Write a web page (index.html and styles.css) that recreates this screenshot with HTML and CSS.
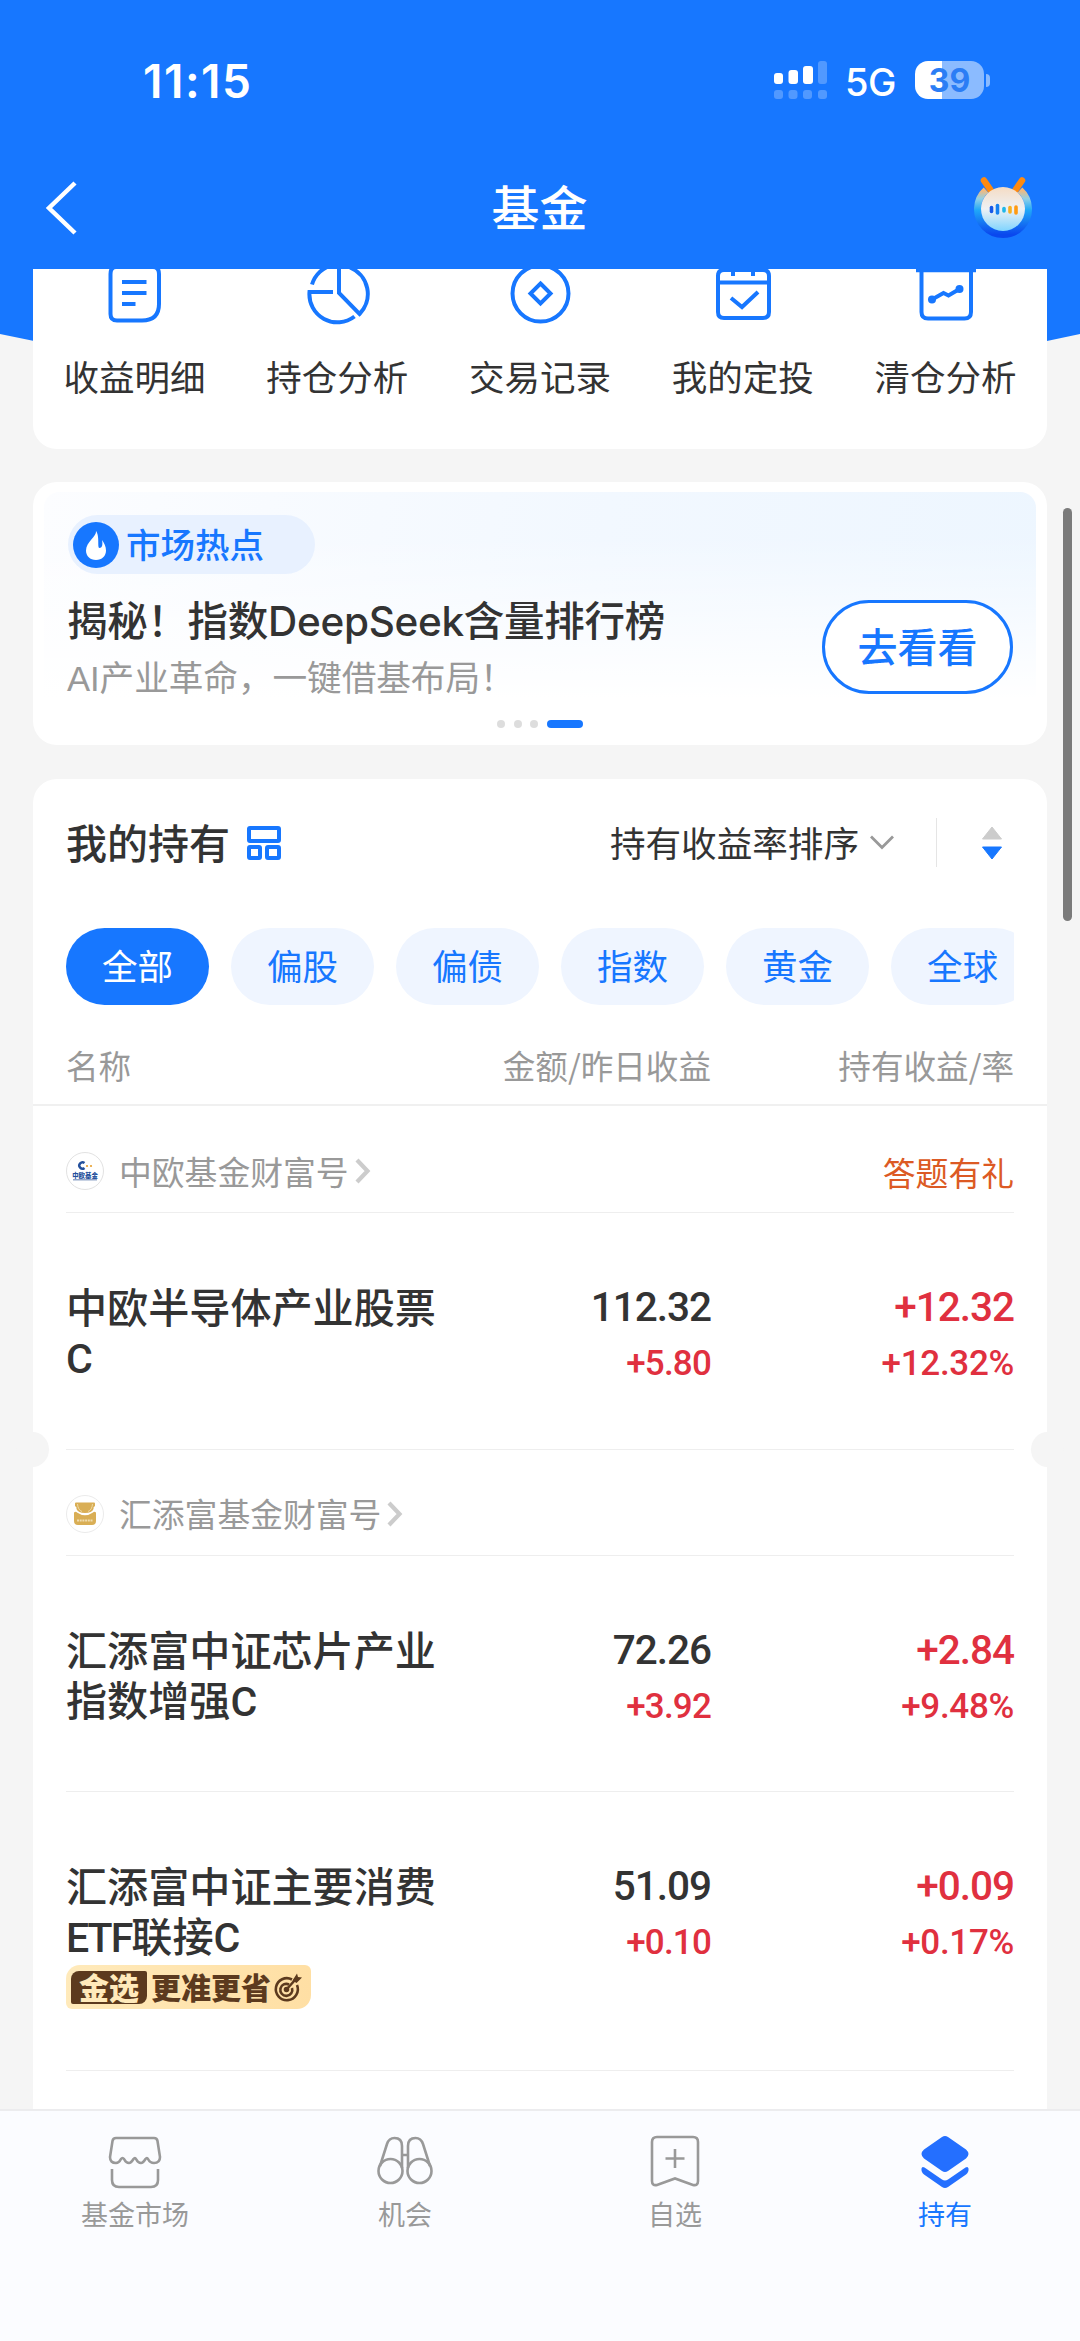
FILE: index.html
```
<!DOCTYPE html>
<html lang="zh-CN">
<head>
<meta charset="utf-8">
<title>基金</title>
<link rel="stylesheet" href="styles.css">
</head>
<body>
<div class="screen">
  <header class="header">
    <div class="status">
      <span class="time">11:15</span>
      <div class="status-right">
        <svg class="signal" width="54" height="38" viewBox="0 0 54 38" fill="#fff">
          <rect x="0" y="12" width="9" height="11" rx="3"/><rect x="14.5" y="9" width="9.500" height="14" rx="3"/><rect x="29" y="5" width="10" height="18" rx="3"/>
          <g opacity=".25"><rect x="44" y="0" width="9" height="23" rx="3"/><rect x="0" y="29" width="9" height="9" rx="3"/><rect x="14.5" y="29" width="9" height="9" rx="3"/><rect x="29" y="29" width="9" height="9" rx="3"/><rect x="44" y="29" width="9" height="9" rx="3"/></g>
        </svg>
        <span class="net">5G</span>
        <div class="battery"><span>39</span></div>
        <i class="battery-cap"></i>
      </div>
    </div>
    <div class="nav">
      <svg width="34" height="56" viewBox="0 0 34 56" fill="none" stroke="#fff" stroke-width="4.500"><path d="M31 2 5 27 31 52"/></svg>
      <h1>基金</h1>
      <svg width="62" height="64" viewBox="0 0 62 64">
        <defs>
          <linearGradient id="ring" x1="0" y1="0" x2="0" y2="1"><stop offset="0" stop-color="#f8b878"/><stop offset=".2" stop-color="#8fd0e8"/><stop offset=".45" stop-color="#20a8f8"/><stop offset="1" stop-color="#0a48ee"/></linearGradient>
          <linearGradient id="face" x1="0" y1="0" x2="0" y2="1"><stop offset="0" stop-color="#f5dcc4"/><stop offset=".5" stop-color="#eef1f4"/><stop offset="1" stop-color="#7fd4ff"/></linearGradient>
        </defs>
        <path d="M13 13A25.500 25.500 0 1 0 47 13" fill="none" stroke="url(#ring)" stroke-width="7"/>
        <path d="M11 3.500 17.500 13M49 3.500 42.500 13" stroke="#ff8a10" stroke-width="6.500" stroke-linecap="round"/>
        <circle cx="30" cy="32" r="22" fill="url(#face)"/>
        <g stroke-width="3.600" stroke-linecap="round"><path d="M18.500 30.500v4" stroke="#1558e8"/><path d="M24.500 28.500v7.500" stroke="#1480f0"/><path d="M31 31.500v2.500" stroke="#20b8e8"/><path d="M37 30.500v4.500" stroke="#f8b020"/><path d="M43 30v6" stroke="#ff9a10"/></g>
      </svg>
    </div>
  </header>

  <main class="content">
    <svg class="arc" width="1080" height="90" viewBox="0 0 1080 90"><path d="M0 0H1080V65Q810 124 540 124T0 65Z" fill="#1777ff"/></svg>
    <section class="card shortcuts">
      <div class="shortcut"><svg viewBox="0 0 64 64"><path d="M14 -2Q8.500 -2 8.500 5V45Q8.500 51.500 15 51.500H40Q57 51.500 57 35V5Q57 -2 51 -2"/><path d="M20 13H44.500M20 24H44.500M20 35H33.500"/></svg><span>收益明细</span></div>
      <div class="shortcut"><svg viewBox="0 0 64 64"><path d="M34 -4V24L54.500 45A28.500 28.500 0 0 0 45 -1.500"/><path d="M28 -4A28 28 0 0 0 7 15.500M28 23H4.500A28 28 0 0 0 49.500 47.500"/></svg><span>持仓分析</span></div>
      <div class="shortcut"><svg viewBox="0 0 64 64"><circle cx="32.500" cy="24.500" r="28"/><path d="M32.500 14.500 42.500 24.500 32.500 34.500 22.500 24.500Z"/></svg><span>交易记录</span></div>
      <div class="shortcut"><svg viewBox="0 0 64 64"><path d="M13 1H52Q58 1 58 7V43Q58 49 52 49H13Q7 49 7 43V7Q7 1 13 1ZM7 13.500H58M22 0V7M42 0V7M20 29 31 38 47 23"/></svg><span>我的定投</span></div>
      <div class="shortcut"><svg viewBox="0 0 64 64"><path d="M2 1.200H62M7.500 1V43Q7.500 49.500 14 49.500H50.500Q57 49.500 57 43V1"/><path d="M18 30.500 29.500 24 34.500 26.500 45.500 20"/><g fill="#1777ff" stroke="none"><circle cx="18" cy="30.500" r="4"/><circle cx="45.500" cy="20" r="4"/></g></svg><span>清仓分析</span></div>
    </section>

    <section class="card banner">
      <div class="banner-bg">
        <div class="banner-text">
          <div class="tag"><svg width="46" height="46" viewBox="0 0 46 46"><circle cx="23" cy="23" r="23" fill="#1777ff"/><path d="M23 9C24 14 13 20 13 28.500C13 34 17 38 23 38C29 38 33 34 33 28.500C33 24 31 21 29 18C30 23 29 26 26.500 26C24 26 27 14 23 9Z" fill="#fff"/></svg><span>市场热点</span></div>
          <h2>揭秘！指数DeepSeek含量排行榜</h2>
          <p>AI产业革命，一键借基布局！</p>
        </div>
        <div class="go">去看看</div>
      </div>
      <div class="dots"><i></i><i></i><i></i><i class="on"></i></div>
    </section>

    <section class="card holdings">
      <div class="hold-head">
        <h2>我的持有</h2>
        <svg width="34" height="34" viewBox="0 0 34 34" fill="none" stroke="#1777ff" stroke-width="4"><rect x="2" y="2" width="30" height="13" rx="1"/><rect x="2" y="21" width="11" height="11" rx="1"/><rect x="20" y="21" width="12" height="11" rx="1"/></svg>
        <span class="sort">持有收益率排序</span>
        <svg width="24" height="16" viewBox="0 0 24 16" fill="none" stroke="#999" stroke-width="2.800"><path d="M1 1.500 12 12.500 23 1.500"/></svg>
        <i class="vline"></i>
        <svg width="20" height="34" viewBox="0 0 20 34" stroke-width="1" stroke-linejoin="round"><path d="M10 1 19.500 13H.5Z" fill="#ccc" stroke="#ccc"/><path d="M.5 21H19.500L10 33Z" fill="#1777ff" stroke="#1777ff"/></svg>
      </div>
      <div class="chips"><span class="chip on">全部</span><span class="chip">偏股</span><span class="chip">偏债</span><span class="chip">指数</span><span class="chip">黄金</span><span class="chip">全球</span></div>
      <div class="cols"><span>名称</span><span>金额/昨日收益</span><span>持有收益/率</span></div>

      <div class="group">
        <svg width="38" height="38" viewBox="0 0 38 38"><circle cx="19" cy="19" r="18.500" fill="#fff" stroke="#e2e2e2"/><path d="M18.500 11A3.200 3.200 0 1 0 18.500 16" fill="none" stroke="#24509c" stroke-width="2.400"/><circle cx="21" cy="14" r="1.100" fill="#e8a030"/><circle cx="25" cy="14" r="1.100" fill="#e8a030"/><text x="19" y="25.500" font-size="6.400" font-weight="900" text-anchor="middle" fill="#24509c">中欧基金</text><path d="M7 27.800H31" stroke="#7890bc" stroke-width="1.200"/></svg>
        <span>中欧基金财富号</span>
        <svg class="chev" width="15" height="26" viewBox="0 0 15 26"><path d="M2 2 12.500 13 2 24"/></svg>
        <em>答题有礼</em>
      </div>
      <div class="row">
        <div class="name">中欧半导体产业股票C</div>
        <div class="num"><b>112.32</b><span>+5.80</span></div>
        <div class="num up"><b>+12.32</b><span>+12.32%</span></div>
      </div>
      <div class="group notch">
        <svg width="38" height="38" viewBox="0 0 38 38"><circle cx="19" cy="19" r="18.500" fill="#fff" stroke="#ebebeb"/><path d="M9 8.500Q9 7.500 10 7.500H28Q29 7.500 29 8.500V11Q27 12 27.500 14Q26 18 19 18T10.500 14Q11 12 9 11Z" fill="#d9ae55"/><path d="M8 17.500Q10 16 11 17.500Q19 23 27 17.500Q28 16 30 17.500V26Q30 30 26 30H12Q8 30 8 26Z" fill="#d9ae55"/><path d="M11.500 9Q12 15 16 16.500M26.500 9Q26 15 22 16.500" fill="none" stroke="#eed9a4" stroke-width="1"/><path d="M11 25.500H27" stroke="#f0dcae" stroke-width="2" stroke-dasharray="2 .7"/></svg>
        <span>汇添富基金财富号</span>
        <svg class="chev" width="15" height="26" viewBox="0 0 15 26"><path d="M2 2 12.500 13 2 24"/></svg>
      </div>
      <div class="row">
        <div class="name">汇添富中证芯片产业指数增强C</div>
        <div class="num"><b>72.26</b><span>+3.92</span></div>
        <div class="num up"><b>+2.84</b><span>+9.48%</span></div>
      </div>
      <div class="row tall">
        <div class="name">汇添富中证主要消费<span class="latin">ETF</span>联接C
          <div class="badge"><strong>金选</strong><span>更准更省</span><svg width="28" height="30" viewBox="0 0 28 30" fill="none" stroke="#5c3a1e" stroke-width="2.600"><path d="M18 7.500A11 11 0 1 0 23 13"/><path d="M15 12.500A6 6 0 1 0 18 16"/><circle cx="12.500" cy="17.500" r="1.500" fill="#5c3a1e"/><path d="M12 18 21 8"/><path d="M18.500 8.500 23 1.500 24 5 28 5.500 22.500 11Z" fill="#5c3a1e" stroke="none"/></svg></div>
        </div>
        <div class="num"><b>51.09</b><span>+0.10</span></div>
        <div class="num up"><b>+0.09</b><span>+0.17%</span></div>
      </div>
    </section>
  </main>

  <nav class="tabs">
    <div class="tab"><svg viewBox="0 0 56 56"><path d="M9 3H47Q50 3 50.500 6L53 22Q53 28 47 28Q43 28 41 24Q40 22 38.500 24Q36 28 34 28Q31 28 29 24Q28 22 26.500 24Q24 28 22 28Q19 28 17 24Q15.500 22 14 24Q12 28 9 28Q3 28 3 22L5.500 6Q6 3 9 3ZM5 34V45Q5 52 12 52H44Q51 52 51 45V34"/></svg><span>基金市场</span></div>
    <div class="tab"><svg viewBox="0 0 56 56"><circle cx="13.500" cy="36" r="12"/><circle cx="42.500" cy="36" r="12"/><path d="M3 31 10 9Q12 3 17.500 3 25 3 25 11V33M31 33V11Q31 3 38.500 3 44 3 46 9L53 31M25 20H31"/></svg><span>机会</span></div>
    <div class="tab"><svg viewBox="0 0 56 56"><path d="M10 2H46Q51 2 51 7V46Q51 51 46 50L28 43.500 10 50Q5 51 5 46V7Q5 2 10 2ZM28 14V33M18.500 23.500H37.500"/></svg><span>自选</span></div>
    <div class="tab on"><svg viewBox="0 0 56 56"><path d="M25 2Q28 0 31 2L49 14.500Q54 19 49 23.500L31 36Q28 38 25 36L7 23.500Q2 19 7 14.500ZM4.500 33.500Q5 31 7.500 32.500L25 44.500Q28 46.500 31 44.500L48.500 32.500Q51 31 51.500 33.500 52 37 49 39.500L31 52Q28 54 25 52L7 39.500Q4 37 4.500 33.500Z"/></svg><span>持有</span></div>
  </nav>
  <div class="scrollbar"></div>
</div>
</body>
</html>
```
FILE: styles.css
```
* { box-sizing: border-box; }
body { margin: 0; }
h1, h2, p { margin: 0; }
svg { display: block; flex: none; overflow: visible; }
.screen {
  position: relative;
  width: 1080px;
  height: 2341px;
  overflow: hidden;
  display: flex;
  flex-direction: column;
  background: #f5f5f5;
  color: #333;
  font-family: "Liberation Sans", "Noto Sans CJK SC", sans-serif;
}
.header { height: 269px; flex: none; background: #1777ff; color: #fff; }
.status {
  height: 160px;
  padding: 0 90px 0 143px;
  display: flex;
  align-items: center;
  justify-content: space-between;
  font-family: Inter, sans-serif;
}
.time { font-size: 46px; font-weight: 600; letter-spacing: 1.500px; padding-top: 1px; }
.status-right { display: flex; align-items: center; }
.net { font-size: 38px; font-weight: 500; margin: 4px 19px 0 17px; line-height: 38px; letter-spacing: -.5px; }
.battery {
  width: 69px;
  height: 38px;
  border-radius: 13px;
  background: linear-gradient(90deg, #fff 27px, #8bbbff 27px);
  color: #2b7df5;
  font-size: 32px;
  font-weight: 700;
  line-height: 39px;
  text-align: center;
}
.battery-cap { width: 4px; height: 13px; margin-left: 2px; border-radius: 0 6px 6px 0; background: #8bbbff; }
.nav {
  height: 98px;
  padding: 0 45px 0 44px;
  display: flex;
  align-items: center;
  justify-content: space-between;
}
.nav h1 { font-size: 48px; font-weight: 500; line-height: 60px; padding-left: 28px; padding-top: 1px; }

.content { position: relative; flex: 1; min-height: 0; overflow: hidden; padding: 0 33px; }
.arc { position: absolute; left: 0; top: 0; }
.card { position: relative; background: #fff; border-radius: 24px; }
.shortcuts {
  height: 180px;
  border-radius: 0 0 24px 24px;
  display: grid;
  grid-template-columns: repeat(5, 1fr);
  overflow: hidden;
}
.shortcut { display: flex; flex-direction: column; align-items: center; font-size: 35.500px; line-height: 52px; }
.shortcut svg { width: 64px; height: 64px; margin-bottom: 20px; fill: none; stroke: #1777ff; stroke-width: 4; }

.banner { height: 263px; margin-top: 33px; padding: 10px 11px 0; }
.banner-bg {
  height: 218px;
  padding: 23px 23px 0 24px;
  display: flex;
  justify-content: space-between;
  border-radius: 16px;
  background: linear-gradient(to bottom, transparent 20%, #fff 95%), linear-gradient(100deg, #fcfdff, #f2f8ff 55%, #edf6ff);
}
.tag {
  width: 247px;
  height: 59px;
  padding-left: 5px;
  display: flex;
  align-items: center;
  gap: 7px;
  border-radius: 30px;
  background: #e8f1ff;
  color: #1777ff;
  font-size: 34.500px;
  font-weight: 500;
}
.tag span { line-height: 50px; padding-top: 2px; }
.banner h2 { font-size: 40.500px; font-weight: 500; line-height: 56px; margin: 20px 0 0 -1px; font-family: Inter, "Noto Sans CJK SC", sans-serif; letter-spacing: -.3px; white-space: nowrap; }
.banner p { font-size: 34.700px; line-height: 50px; margin: 4px 0 0 -1px; color: #999; letter-spacing: -.1px; }
.go {
  width: 191px;
  height: 94px;
  margin-top: 85px;
  border: 3px solid #1777ff;
  border-radius: 47px;
  background: #fff;
  color: #1777ff;
  font-size: 40px;
  font-weight: 500;
  line-height: 90px;
  text-align: center;
}
.dots { display: flex; justify-content: center; gap: 8.500px; margin-top: 10px; }
.dots i { width: 8px; height: 8px; border-radius: 4px; background: #ddd; }
.dots .on { width: 36px; background: #1777ff; }

.holdings { height: 1400px; margin-top: 34px; }
.hold-head { height: 127px; padding: 0 45px 0 33px; display: flex; align-items: center; }
.hold-head h2 { font-size: 41px; font-weight: 500; margin-right: 17px; padding-bottom: 3px; }
.sort { margin-left: auto; margin-right: 11px; padding-bottom: 2px; font-size: 35.600px; }
.vline { width: 1px; height: 49px; margin: 0 45px 0 42px; background: #e5e5e5; }
.chips { margin: 22px 33px 0; display: flex; gap: 22px; overflow: hidden; }
.chip {
  flex: none;
  width: 143px;
  height: 77px;
  border-radius: 39px;
  background: #eff5ff;
  color: #1777ff;
  font-size: 35.500px;
  line-height: 80px;
  text-align: center;
}
.chip.on { background: #1777ff; color: #fff; }
.cols {
  height: 101px;
  padding: 22px 33px 0;
  display: grid;
  grid-template-columns: 368px 277px 303px;
  border-bottom: 2px solid #f0f0f0;
  font-family: "Noto Sans CJK SC", sans-serif;
  font-size: 32.600px;
  line-height: 76px;
  color: #999;
}
.cols span + span { text-align: right; }
.group {
  position: relative;
  height: 107px;
  margin: 0 33px;
  padding-top: 24px;
  display: flex;
  align-items: center;
  border-bottom: 1.500px solid #eee;
  font-size: 32.800px;
  color: #999;
}
.group span { margin: 0 6px 0 15px; padding-bottom: 2px; }
.group em { margin-left: auto; font-style: normal; color: #dc5a24; }
.chev { fill: none; stroke: #ccc; stroke-width: 4.200; }
.group.notch { height: 106px; padding-top: 22px; }
.notch::before, .notch::after {
  content: "";
  position: absolute;
  top: -18px;
  width: 33px;
  height: 35px;
  border-radius: 50%;
  background: #f5f5f5;
}
.notch::before { left: -50px; }
.notch::after { right: -50px; }
.row {
  height: 237px;
  margin: 0 33px;
  padding-top: 69px;
  display: grid;
  grid-template-columns: 380px 265px 303px;
  border-bottom: 1.500px solid #eee;
}
.notch + .row { height: 236px; }
.row.tall { height: 279px; }
.name { padding-top: 3px; font-family: Roboto, "Noto Sans CJK SC", sans-serif; font-size: 41.100px; font-weight: 500; line-height: 49.500px; }
.latin { letter-spacing: -2px; }
.num { display: flex; flex-direction: column; align-items: flex-end; font-family: Roboto, sans-serif; font-weight: 500; }
.num b { font-size: 40.500px; font-weight: 500; line-height: 50px; letter-spacing: -1px; }
.num span { font-size: 35px; line-height: 50px; margin-top: 7px; letter-spacing: -.8px; color: #e0303f; }
.num.up b { color: #e0303f; }
.num.up span { letter-spacing: -.3px; }
.badge {
  width: 245px;
  height: 44px;
  margin-top: 2px;
  padding: 0 5px;
  display: flex;
  align-items: center;
  border-radius: 14px 6px 14px 6px;
  background: linear-gradient(90deg, #ffeabb, #ffdfa4);
  color: #5c3a1e;
  font-family: "Noto Sans CJK SC", sans-serif;
  font-size: 30px;
  font-weight: 900;
  line-height: 31px;
  white-space: nowrap;
}
.badge strong { width: 76px; height: 33px; border-radius: 8px 2px 8px 2px; background: #5c3a1e; color: #ffeabb; text-align: center; font-weight: 900; margin-right: 4px; }
.badge span { padding-bottom: 2px; }
.badge svg { margin-left: 3px; }

.tabs {
  position: relative;
  height: 232px;
  flex: none;
  padding-top: 24px;
  display: grid;
  grid-template-columns: repeat(4, 1fr);
  border-top: 2px solid #ececee;
  background: #fbfcff;
  color: #999;
  font-size: 27px;
}
.tab { display: flex; flex-direction: column; align-items: center; line-height: 40px; }
.tab svg { width: 56px; height: 56px; margin-bottom: 5px; fill: none; stroke: #999; stroke-width: 2.600; }
.tab.on { color: #1777ff; }
.tab.on svg { fill: #246fff; stroke: none; }
.scrollbar { position: absolute; left: 1063px; top: 508px; width: 9px; height: 413px; border-radius: 5px; background: #7b7b7b; }
```
